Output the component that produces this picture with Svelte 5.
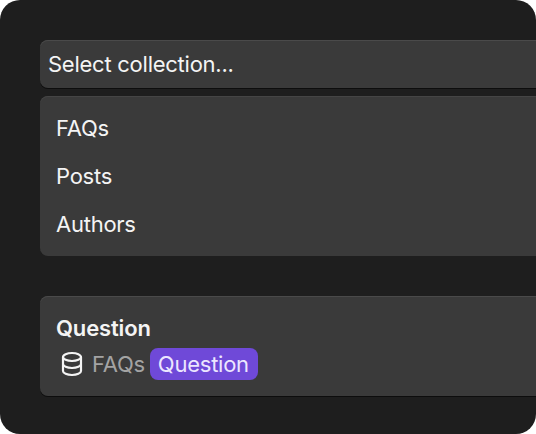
<script lang="ts">
	const collections = ['FAQs', 'Posts', 'Authors'];
</script>

<div class="frame">
	<div class="stack">
		<button class="select">Select collection...</button>
		<ul class="options">
			{#each collections as name}
				<li>{name}</li>
			{/each}
		</ul>
		<div class="card">
			<div class="title">Question</div>
			<div class="meta">
				<svg class="db" width="24" height="28" viewBox="0 0 24 28" fill="none" stroke="currentColor" stroke-width="2.2" stroke-linecap="round" stroke-linejoin="round" aria-hidden="true">
					<ellipse cx="12" cy="7" rx="9" ry="4" />
					<path d="M3 7v14c0 2.2 4 4 9 4s9-1.8 9-4V7" />
					<path d="M3 14c0 2.2 4 4 9 4s9-1.8 9-4" />
				</svg>
				<span class="source">FAQs</span>
				<span class="tag">Question</span>
			</div>
		</div>
	</div>
</div>

<style>
	:global(body) {
		background: #fff;
		font-family: Inter, "Noto Sans", sans-serif;
	}

	.frame {
		width: 536px;
		height: 434px;
		box-sizing: border-box;
		padding: 40px 0 0 40px;
		background: #1e1e1e;
		border-radius: 20px;
		overflow: hidden;
	}

	.stack {
		display: flex;
		flex-direction: column;
		width: 560px;
		letter-spacing: -0.25px;
	}

	.select {
		height: 48px;
		padding: 0 8px;
		border: 0;
		border-radius: 8px;
		background: #3a3a3a;
		box-shadow: inset 0 1px 0 #4a4a4a, 0 1px 0 #0d0d0d;
		color: #f4f4f4;
		font: inherit;
		font-size: 22px;
		letter-spacing: inherit;
		text-align: left;
	}

	.options {
		list-style: none;
		margin: 8px 0 0;
		padding: 8px 16px;
		border-radius: 8px;
		background: #3a3a3a;
		box-shadow: inset 0 1px 0 #454545;
		color: #f4f4f4;
		font-size: 22px;
	}

	.options li {
		height: 48px;
		line-height: 48px;
	}

	.card {
		box-sizing: border-box;
		height: 100px;
		margin-top: 40px;
		padding: 20px 16px 0;
		border-radius: 8px;
		background: #3a3a3a;
		box-shadow: inset 0 1px 0 #4a4a4a, 0 1px 0 #0d0d0d;
		color: #f4f4f4;
		font-size: 22px;
	}

	.title {
		font-weight: 600;
		line-height: 24px;
		letter-spacing: -0.15px;
	}

	.meta {
		display: flex;
		align-items: center;
		height: 32px;
		margin-top: 8px;
	}

	.db {
		margin: 0 8px 0 4px;
	}

	.source {
		color: #a3a3a3;
	}

	.tag {
		margin-left: 5px;
		padding: 0 9px 0 8px;
		line-height: 32px;
		border-radius: 8px;
		background: #6f49d8;
		color: #ece6ff;
	}
</style>
